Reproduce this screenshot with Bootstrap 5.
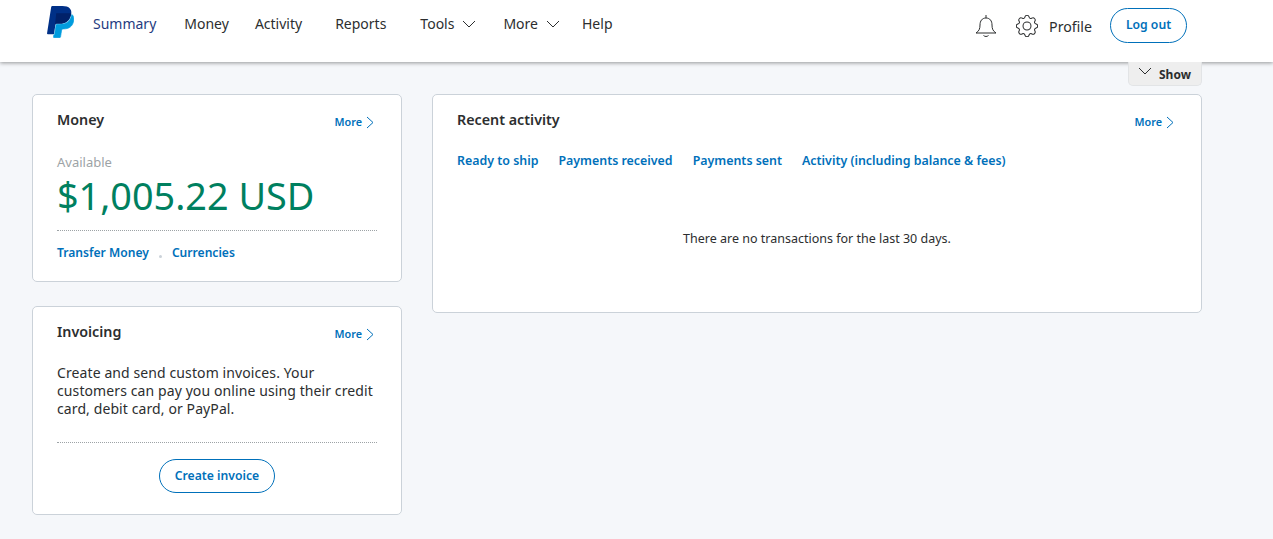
<!doctype html>
<html lang="en"><head><meta charset="utf-8"><title>Summary</title>
<link href="https://cdn.jsdelivr.net/npm/bootstrap@5.3.0/dist/css/bootstrap.min.css" rel="stylesheet">
<style>
html,body{height:100%}
body{background:#f5f7fa;font-family:"Noto Sans",sans-serif;color:#2c2e2f;overflow:hidden}
.pp-head{height:62px;background:#fff;box-shadow:0 1px 4px rgba(0,0,0,.4);padding-left:47px;padding-right:86px}
.pp-logo{width:27px;height:32px;margin-top:6px;margin-right:19px;display:block;flex:none}
.pp-nav{height:48px;align-self:flex-start}
.pp-link{font-size:14px;color:#2c2e2f;text-decoration:none;line-height:47px;white-space:nowrap}
.pp-link.now{color:#253b80}
.pp-g28{margin-right:28px}.pp-g26{margin-right:26px}.pp-g33{margin-right:33px}.pp-g34{margin-right:34px}.pp-g27{margin-right:27px}.pp-g22{margin-right:22px}
.pp-chev{width:14px;height:8px;margin-left:8px;vertical-align:1px}
.pp-right{align-self:flex-start;margin-top:8px}
.pp-bell{margin-right:19px}
.pp-gear{width:22px;height:22px}
.btn-pp{border:1px solid #0070ba;color:#0070ba;background:#fff;border-radius:18px;font-weight:600;padding:0;display:flex;align-items:center;justify-content:center}
.btn-pp:hover{color:#0070ba;border-color:#0070ba;background:#fff}
.btn-logout{width:77px;height:35px;font-size:12.2px}
.btn-create{width:116px;height:34px;font-size:12.2px}
.pp-profile{font-size:14.2px;color:#2c2e2f;margin-left:11px;margin-right:18px;text-decoration:none;padding-top:2px}
.pp-main{width:1170px;margin-left:32px}
.pp-show{height:24px;width:74px;background:#eeeeee;border:1px solid #e2e4e6;border-top:0;border-radius:0 0 5px 5px;font-size:12px;font-weight:700;color:#2c2e2f;padding:2px 10px 0 9px;gap:7px;margin-bottom:8px}
.pp-show svg{margin-top:-8px}
.pp-grid{gap:30px;align-items:flex-start}
.pp-side{width:370px;flex:none;gap:24px}
.pp-wide{width:770px;flex:none;height:219px}
.pp-card{background:#fff;border:1px solid #cbd2d9;border-radius:5px;padding:16px 24px 0}
.pp-money{height:188px}
.pp-inv{height:209px}
.pp-title{font-size:14.3px;font-weight:600;line-height:18px;margin:0;color:#2c2e2f}
.pp-more{font-size:10.8px;font-weight:600;color:#0070ba;text-decoration:none;line-height:14px;margin-top:4px;margin-right:3px;gap:4px}
.pp-more svg{width:8px;height:13px}
.pp-avail{font-size:13px;color:#9da3a6;line-height:16px;margin-top:25px}
.pp-amount{font-size:37.800px;line-height:44px;color:#00805f;margin-top:4px}
.pp-dot{border-top:1px dotted #9da3a6;height:0}
.pp-dot-a{margin-top:12px}
.pp-a{font-size:12.4px;font-weight:600;color:#0070ba;text-decoration:none;white-space:nowrap}
.pp-foot{margin-top:13px}
.pp-foot .pp-a{font-size:12.1px}
.pp-sep{width:3px;height:3px;background:#cbd2d9;border-radius:50%;margin:0 10px 4px;align-self:flex-end}
.pp-text{font-size:14px;letter-spacing:.1px;line-height:18px;color:#2c2e2f;margin:23px 0 24px}
.pp-cta{margin-top:16px}
.pp-tabs{gap:20px;margin-top:23px}
.pp-empty{font-size:12.5px;line-height:16px;margin-top:60px}
</style></head>
<body>
<header class="pp-head d-flex align-items-center justify-content-between">
 <nav class="d-flex pp-nav">
  <svg class="pp-logo" viewBox="1.8 0 20.5 24.200" preserveAspectRatio="none" aria-label="PayPal">
   <path fill="#003087" d="M7.076 21.337H2.47a.641.641 0 0 1-.633-.74L4.944.901C5.026.382 5.474 0 5.998 0h7.46c2.57 0 4.578.543 5.69 1.81 1.01 1.15 1.304 2.42 1.012 4.287-.023.143-.047.288-.077.437-.983 5.05-4.349 6.797-8.647 6.797h-2.19c-.524 0-.968.382-1.05.9l-1.12 7.106z"/>
   <path fill="#009cde" stroke="#009cde" stroke-width=".5" d="M21.222 6.917a3.35 3.35 0 0 0-.607-.541c-.013.076-.026.175-.041.254-.93 4.778-4.005 7.201-9.138 7.201h-2.19a.563.563 0 0 0-.556.479l-1.187 7.527h-.506l-.24 1.516a.56.56 0 0 0 .554.647h3.882c.46 0 .85-.334.922-.788.06-.26.76-4.852.816-5.09a.932.932 0 0 1 .923-.788h.58c3.76 0 6.705-1.528 7.565-5.946.36-1.847.174-3.388-.777-4.471z"/>
   <path fill="#012169" d="M8.800 5.500h11.300c-.6 4.900-3.800 7.800-8.700 7.800H9.200c-.5 0-.9.200-1.300.600z"/>
  </svg>
  <a class="pp-link now pp-g28" href="#">Summary</a>
  <a class="pp-link pp-g26" href="#">Money</a>
  <a class="pp-link pp-g33" href="#">Activity</a>
  <a class="pp-link pp-g34" href="#">Reports</a>
  <a class="pp-link pp-g27" href="#">Tools<svg class="pp-chev" viewBox="0 0 14 8"><path d="M1 1l6 6 6-6" fill="none" stroke="#2c2e2f"/></svg></a>
  <a class="pp-link pp-g22" href="#">More<svg class="pp-chev" viewBox="0 0 14 8"><path d="M1 1l6 6 6-6" fill="none" stroke="#2c2e2f"/></svg></a>
  <a class="pp-link" href="#">Help</a>
 </nav>
 <div class="d-flex align-items-center pp-right">
  <svg class="pp-bell" width="22" height="24" viewBox="0 0 22 24"><path d="M11 1v3M11 4c-4 0-6 3-6 7 0 4-1 6-4 8h20c-3-2-4-4-4-8 0-4-2-7-6-7zM8.500 21.500c1.500 1.300 3.500 1.300 5 0" fill="none" stroke="#2c2e2f" stroke-width="1"/></svg>
  <svg class="pp-gear" viewBox="0 0 16 16"><circle cx="8" cy="8" r="2.900" fill="none" stroke="#2c2e2f" stroke-width=".75"/><path fill="none" stroke="#2c2e2f" stroke-width=".75" d="M9.500 1.400c-.45-1.550-2.550-1.550-3 0l-.094.319a1.200 1.200 0 0 1-1.700.7l-.292-.16c-1.400-.76-2.950.78-2.190 2.190l.159.292a1.200 1.200 0 0 1-.7 1.700l-.319.094c-1.550.45-1.550 2.550 0 3l.319.094a1.200 1.200 0 0 1 .7 1.700l-.16.292c-.76 1.400.78 2.950 2.190 2.190l.292-.159a1.200 1.200 0 0 1 1.700.7l.094.319c.45 1.550 2.550 1.550 3 0l.094-.319a1.200 1.200 0 0 1 1.700-.7l.292.16c1.400.76 2.950-.78 2.190-2.190l-.159-.292a1.200 1.200 0 0 1 .7-1.700l.319-.094c1.550-.45 1.550-2.550 0-3l-.319-.094a1.200 1.200 0 0 1-.7-1.700l.16-.292c.76-1.400-.78-2.950-2.190-2.190l-.292.159a1.200 1.200 0 0 1-1.700-.7z"/></svg>
  <a class="pp-profile" href="#">Profile</a>
  <a class="btn btn-pp btn-logout" href="#">Log out</a>
 </div>
</header>
<main class="pp-main">
 <div class="d-flex justify-content-end">
  <div class="pp-show d-flex align-items-center"><svg width="14" height="8" viewBox="0 0 14 8"><path d="M1 1l6 6 6-6" fill="none" stroke="#2c2e2f"/></svg><span>Show</span></div>
 </div>
 <div class="d-flex pp-grid">
  <div class="d-flex flex-column pp-side">
   <section class="pp-card pp-money">
    <div class="d-flex justify-content-between"><h2 class="pp-title">Money</h2><a class="pp-more d-flex align-items-center" href="#">More<svg viewBox="0 0 8 13"><path d="M1 1l6 5.500-6 5.500" fill="none" stroke="#0070ba"/></svg></a></div>
    <div class="pp-avail">Available</div>
    <div class="pp-amount">$1,005.22 USD</div>
    <div class="pp-dot pp-dot-a"></div>
    <div class="d-flex pp-foot"><a class="pp-a" href="#">Transfer Money</a><span class="pp-sep"></span><a class="pp-a" href="#">Currencies</a></div>
   </section>
   <section class="pp-card pp-inv">
    <div class="d-flex justify-content-between"><h2 class="pp-title">Invoicing</h2><a class="pp-more d-flex align-items-center" href="#">More<svg viewBox="0 0 8 13"><path d="M1 1l6 5.500-6 5.500" fill="none" stroke="#0070ba"/></svg></a></div>
    <p class="pp-text">Create and send custom invoices. Your customers can pay you online using their credit card, debit card, or PayPal.</p>
    <div class="pp-dot"></div>
    <div class="d-flex justify-content-center pp-cta"><a class="btn btn-pp btn-create" href="#">Create invoice</a></div>
   </section>
  </div>
  <section class="pp-card pp-wide">
   <div class="d-flex justify-content-between"><h2 class="pp-title">Recent activity</h2><a class="pp-more d-flex align-items-center" href="#">More<svg viewBox="0 0 8 13"><path d="M1 1l6 5.500-6 5.500" fill="none" stroke="#0070ba"/></svg></a></div>
   <div class="d-flex pp-tabs"><a class="pp-a" href="#">Ready to ship</a><a class="pp-a" href="#">Payments received</a><a class="pp-a" href="#">Payments sent</a><a class="pp-a" href="#">Activity (including balance &amp; fees)</a></div>
   <p class="pp-empty text-center">There are no transactions for the last 30 days.</p>
  </section>
 </div>
</main>
<script src="https://cdn.jsdelivr.net/npm/bootstrap@5.3.0/dist/js/bootstrap.bundle.min.js"></script>
</body></html>
